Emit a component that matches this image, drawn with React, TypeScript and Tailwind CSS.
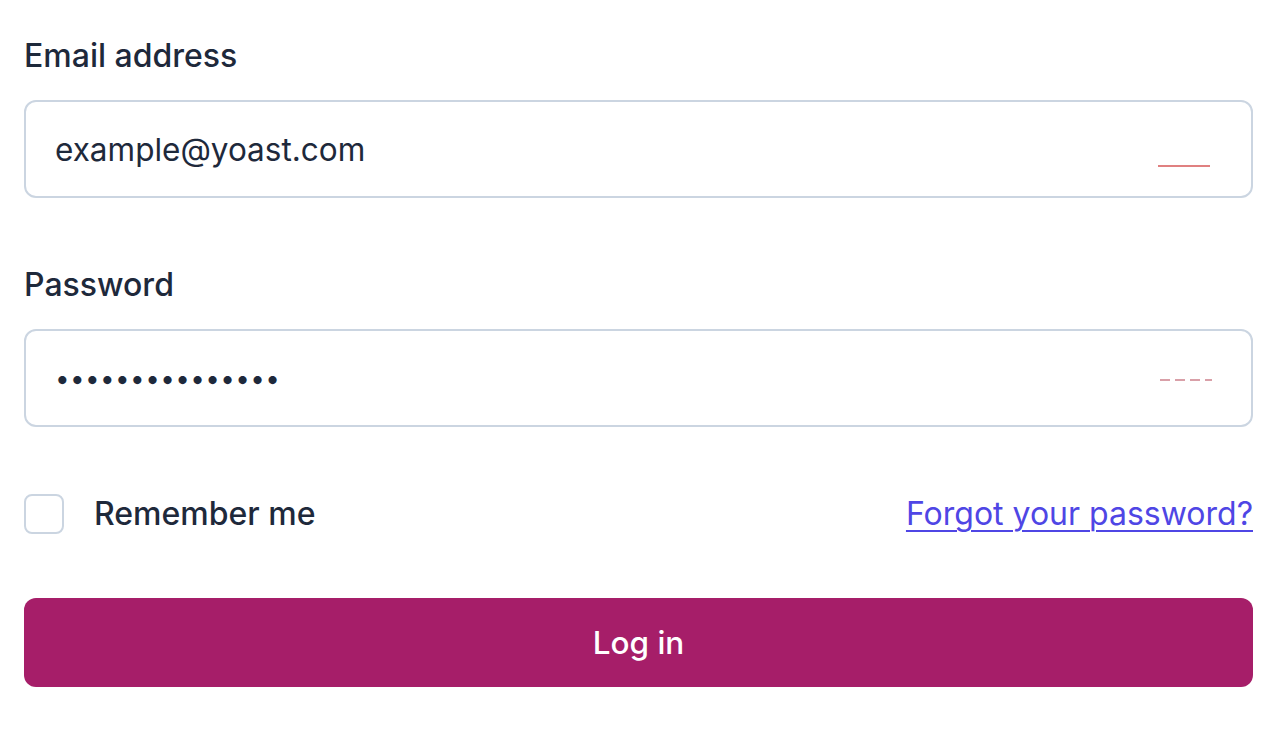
import { useState } from "react";

const Field = ({
  label,
  type,
  value,
  mark,
}: {
  label: string;
  type: string;
  value: string;
  mark: "solid" | "dashed";
}) => {
  return (
    <div className="flex flex-col">
      <label className="text-[32px] font-medium text-[#1e293b] leading-[40px]">{label}</label>
      <div className="relative mt-[24px]">
        <input
          type={type}
          defaultValue={value}
          readOnly
          className={
            type === "password"
              ? "w-full h-[98px] rounded-[12px] border-2 border-[#cbd5e1] bg-white pl-[29px] pr-[120px] text-[26px] tracking-[0.4px] text-[#1e293b] outline-none"
              : "w-full h-[98px] rounded-[12px] border-2 border-[#cbd5e1] bg-white pl-[29px] pr-[120px] text-[31.5px] text-[#1e293b] outline-none"
          }
        />
        {/* faint password-manager marks */}
        {mark === "solid" ? (
          <span className="absolute right-[43px] top-[65px] h-[2px] w-[52px] bg-[#e08080]" />
        ) : (
          <svg className="absolute right-[41px] top-[50px]" width="52" height="2" viewBox="0 0 52 2">
            <line x1="0" y1="1" x2="52" y2="1" stroke="#d9a0a8" strokeWidth="2" strokeDasharray="10 5" />
          </svg>
        )}
      </div>
    </div>
  );
};

export default function App() {
  const [remember, setRemember] = useState(false);
  return (
    <div
      className="min-h-[732px] bg-white pl-[24px] pr-[31px] pt-[36px]"
      style={{ fontFamily: "Inter, 'Noto Sans', sans-serif" }}
    >
      <form className="flex flex-col" onSubmit={(e) => e.preventDefault()}>
        <Field label="Email address" type="email" value="example@yoast.com" mark="solid" />
        <div className="mt-[67px]">
          <Field label="Password" type="password" value="passwordexample" mark="dashed" />
        </div>
        <div className="mt-[63px] flex items-center justify-between">
          <label className="flex items-center">
            <input
              type="checkbox"
              checked={remember}
              onChange={() => setRemember(!remember)}
              className="h-[40px] w-[40px] appearance-none rounded-[8px] border-2 border-[#cbd5e1] bg-white"
            />
            <span className="ml-[30px] text-[32px] font-medium text-[#1e293b]">Remember me</span>
          </label>
          <a
            href="#"
            className="text-[32px] text-[#4f46e5] underline underline-offset-[5px] decoration-2"
          >
            Forgot your password?
          </a>
        </div>
        <button
          type="submit"
          className="mt-[60px] h-[89px] w-full rounded-[12px] bg-[#a61e69] text-[31.5px] font-medium text-white"
        >
          Log in
        </button>
      </form>
    </div>
  );
}
